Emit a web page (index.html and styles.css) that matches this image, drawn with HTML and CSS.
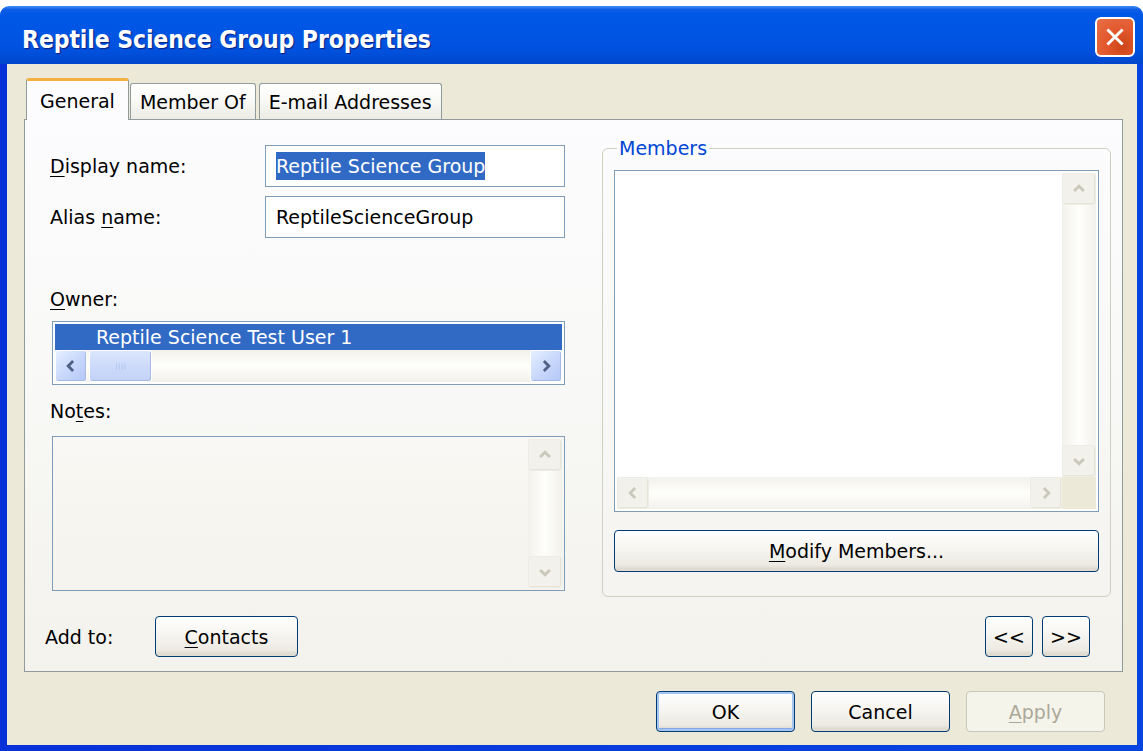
FILE: index.html
```html
<!DOCTYPE html>
<html lang="en">
<head>
<meta charset="utf-8">
<title>Reptile Science Group Properties</title>
<link rel="stylesheet" href="styles.css">
</head>
<body>
<div class="window">
  <div class="titlebar">
    <span class="title">Reptile Science Group Properties</span>
    <button class="close" aria-label="Close">
      <svg viewBox="0 0 20 20" width="22" height="22"><path d="M4 4 L16 16 M16 4 L4 16" stroke="#fff" stroke-width="2.6" stroke-linecap="square"/></svg>
    </button>
  </div>
  <div class="frame">
    <div class="client">
      <div class="tabs">
        <div class="tab active">General</div>
        <div class="tab">Member Of</div>
        <div class="tab">E-mail Addresses</div>
      </div>
      <div class="panel">
        <div class="col-left">
          <div class="field-row">
            <label class="lbl"><u>D</u>isplay name:</label>
            <div class="textbox"><span class="sel">Reptile Science Group</span></div>
          </div>
          <div class="field-row">
            <label class="lbl">Alias <u>n</u>ame:</label>
            <div class="textbox">ReptileScienceGroup</div>
          </div>
          <div class="lbl owner-lbl"><u>O</u>wner:</div>
          <div class="owner-box">
            <div class="owner-row">Reptile Science Test User 1</div>
            <div class="hscroll active-sb">
              <span class="sb-btn"><svg viewBox="0 0 10 10" width="14" height="14"><path d="M6.5 1.5 L3 5 L6.5 8.5" fill="none" stroke="#4d6185" stroke-width="2"/></svg></span>
              <span class="sb-thumb"><svg viewBox="0 0 12 8" width="14" height="9"><path d="M2 1v6M4.5 1v6M7 1v6M9.5 1v6" stroke="#b6c9ee" stroke-width="1"/></svg></span>
              <span class="sb-track"></span>
              <span class="sb-btn"><svg viewBox="0 0 10 10" width="14" height="14"><path d="M3.5 1.5 L7 5 L3.5 8.5" fill="none" stroke="#4d6185" stroke-width="2"/></svg></span>
            </div>
          </div>
          <div class="lbl notes-lbl">No<u>t</u>es:</div>
          <div class="notes-box">
            <div class="notes-text"></div>
            <div class="vscroll">
              <span class="sb-btn dis"><svg viewBox="0 0 10 10" width="14" height="14"><path d="M1.5 6.5 L5 3 L8.5 6.5" fill="none" stroke="#cac8bb" stroke-width="2"/></svg></span>
              <span class="sb-track"></span>
              <span class="sb-btn dis"><svg viewBox="0 0 10 10" width="14" height="14"><path d="M1.5 3.5 L5 7 L8.5 3.5" fill="none" stroke="#cac8bb" stroke-width="2"/></svg></span>
            </div>
          </div>
        </div>

        <fieldset class="group">
          <legend>Members</legend>
          <div class="members-box">
            <div class="members-view"></div>
            <div class="vscroll">
              <span class="sb-btn dis"><svg viewBox="0 0 10 10" width="14" height="14"><path d="M1.5 6.5 L5 3 L8.5 6.5" fill="none" stroke="#cac8bb" stroke-width="2"/></svg></span>
              <span class="sb-track"></span>
              <span class="sb-btn dis"><svg viewBox="0 0 10 10" width="14" height="14"><path d="M1.5 3.5 L5 7 L8.5 3.5" fill="none" stroke="#cac8bb" stroke-width="2"/></svg></span>
            </div>
            <div class="hscroll">
              <span class="sb-btn dis"><svg viewBox="0 0 10 10" width="14" height="14"><path d="M6.5 1.5 L3 5 L6.5 8.5" fill="none" stroke="#cac8bb" stroke-width="2"/></svg></span>
              <span class="sb-track"></span>
              <span class="sb-btn dis"><svg viewBox="0 0 10 10" width="14" height="14"><path d="M3.5 1.5 L7 5 L3.5 8.5" fill="none" stroke="#cac8bb" stroke-width="2"/></svg></span>
            </div>
            <div class="sb-corner"></div>
          </div>
          <button class="btn wide"><u>M</u>odify Members...</button>
        </fieldset>

        <div class="bottom-row">
          <span class="lbl add-lbl">Add to:</span>
          <button class="btn contacts"><u>C</u>ontacts</button>
          <span class="spacer"></span>
          <button class="btn nav">&lt;&lt;</button>
          <button class="btn nav">&gt;&gt;</button>
        </div>
      </div>
      <div class="dialog-buttons">
        <button class="btn dlg default">OK</button>
        <button class="btn dlg">Cancel</button>
        <button class="btn dlg disabled"><u>A</u>pply</button>
      </div>
    </div>
  </div>
</div>
</body>
</html>
```

FILE: styles.css
```css
* { box-sizing: border-box; }

html, body {
  margin: 0;
  padding: 0;
  background: #ffffff;
}

body {
  font-family: "DejaVu Sans", "Liberation Sans", sans-serif;
  font-size: 19px;
  color: #000;
  overflow: hidden;
}

u { text-decoration-thickness: 1px; text-underline-offset: 3px; }

/* ---------- window chrome ---------- */
.window {
  margin-top: 6px;
  width: 1143px;
  height: 745px;
  display: flex;
  flex-direction: column;
  border-radius: 9px 9px 0 0;
  overflow: hidden;
}

.titlebar {
  height: 58px;
  flex: none;
  display: flex;
  align-items: center;
  justify-content: space-between;
  padding: 8px 8px 0 22px;
  background: linear-gradient(180deg, #3f8cf3 0%, #0f5fe6 6%, #0057e6 14%, #0055e3 50%, #0050dc 80%, #0046cc 100%);
}

.title {
  color: #fff;
  font-family: "DejaVu Sans Condensed", "DejaVu Sans", sans-serif;
  font-stretch: condensed;
  font-weight: bold;
  font-size: 24.5px;
  letter-spacing: -0.1px;
  text-shadow: 1px 1px 1px #0a1e80;
}

.close {
  width: 40px;
  height: 40px;
  padding: 0;
  margin-top: -4px;
  border: 2px solid #fff;
  border-radius: 6px;
  background: radial-gradient(circle at 70% 75%, #cc4418 0%, #e2582c 45%, #e9704a 100%);
  display: flex;
  align-items: center;
  justify-content: center;
}

.frame {
  flex: 1;
  display: flex;
  padding: 0 6px 6px 7px;
  background: linear-gradient(90deg, #0831d9 0%, #0845e0 100%);
}

.client {
  flex: 1;
  background: #ece9d8;
  padding: 14px 14px 0 17px;
  display: flex;
  flex-direction: column;
}

/* ---------- tabs ---------- */
.tabs {
  height: 41px;
  display: flex;
  align-items: flex-end;
  padding-left: 2px;
  position: relative;
  z-index: 2;
}

.tab {
  height: 36px;
  padding: 0 9px;
  display: flex;
  align-items: center;
  border: 1px solid #919b9c;
  border-bottom: none;
  border-radius: 3px 3px 0 0;
  background: linear-gradient(180deg, #ffffff 0%, #fafaf8 40%, #ecebe5 100%);
  margin-left: 3px;
}

.tab.active + .tab { margin-left: 1px; }

.tab.active {
  height: 42px;
  margin-bottom: -1px;
  margin-left: 0;
  padding: 0 13px;
  border-top: 3px solid #f3b142;
  background: #fcfcfe;
}

/* ---------- property page ---------- */
.panel {
  height: 553px;
  flex: none;
  border: 1px solid #919b9c;
  background: linear-gradient(180deg, #fcfcfe 0%, #f8f8f6 50%, #f3f2ed 100%);
  padding: 25px 11px 0 25px;
  display: grid;
  grid-template-columns: 515px 509px;
  grid-template-rows: 452px 41px;
  column-gap: 37px;
  row-gap: 19px;
}

.col-left {
  display: flex;
  flex-direction: column;
}

.lbl { white-space: nowrap; }

.field-row {
  height: 42px;
  display: flex;
  align-items: center;
  margin-bottom: 9px;
}

.field-row .lbl { width: 215px; }

.textbox {
  width: 300px;
  height: 42px;
  border: 1px solid #7f9db9;
  background: #fff;
  display: flex;
  align-items: center;
  padding-left: 10px;
  white-space: nowrap;
  overflow: hidden;
}

.sel {
  background: #316ac5;
  color: #fff;
  padding: 2px 0;
  line-height: 24px;
}

.owner-lbl {
  margin-top: 40px;
  line-height: 24px;
}

.owner-box {
  margin: 10px 0 0 2px;
  width: 513px;
  height: 64px;
  border: 1px solid #7f9db9;
  background: #fff;
  padding: 2px;
  display: flex;
  flex-direction: column;
}

.owner-row {
  height: 26px;
  background: #316ac5;
  color: #fff;
  padding-left: 41px;
  line-height: 26px;
  white-space: nowrap;
}

.notes-lbl {
  margin-top: 14px;
  line-height: 24px;
}

.notes-box {
  margin: 13px 0 0 2px;
  width: 513px;
  height: 155px;
  border: 1px solid #7f9db9;
  background: linear-gradient(180deg, #f9f8f4, #f4f3ee);
  padding: 2px;
  display: flex;
}

.notes-text { flex: 1; }

/* ---------- scrollbars ---------- */
.hscroll {
  height: 32px;
  display: flex;
  background: linear-gradient(180deg, #f3f1ec 0%, #fefefb 50%, #f3f1ec 100%);
}

.vscroll {
  width: 34px;
  display: flex;
  flex-direction: column;
  background: linear-gradient(90deg, #f3f1ec 0%, #fefefb 50%, #f3f1ec 100%);
}

.sb-btn {
  width: 32px;
  height: 32px;
  flex: none;
  display: flex;
  align-items: center;
  justify-content: center;
  border: 1px solid #fff;
  border-radius: 3px;
}

.vscroll .sb-btn { width: 34px; }

.sb-btn.dis {
  background: #f2f1eb;
  border-color: #eeede5;
  box-shadow: inset -1px -1px 0 #e6e4d8;
}

.sb-track { flex: 1; }

.active-sb .sb-btn {
  background: linear-gradient(135deg, #e6efff 0%, #c9d8fc 50%, #b4c8f6 100%);
  border-color: #fff;
  box-shadow: inset -1px -1px 0 #a5b9e4;
}

.sb-thumb {
  width: 63px;
  margin-left: 2px;
  display: flex;
  align-items: center;
  justify-content: center;
  border: 1px solid #fff;
  border-radius: 3px;
  background: linear-gradient(180deg, #dbe6fd 0%, #cddafa 50%, #c2d3f8 100%);
  box-shadow: inset -1px -1px 0 #a5b9e4;
}

/* ---------- members group ---------- */
.group {
  margin: -8px 0 0 0;
  padding: 0 11px 24px 11px;
  border: 1px solid #d0d0bf;
  border-radius: 6px;
  min-width: 0;
  display: flex;
  flex-direction: column;
}

.group legend {
  color: #0046d5;
  padding: 0 2px;
  margin-left: 3px;
  line-height: 22px;
}

.members-box {
  margin-top: 11px;
  height: 342px;
  border: 1px solid #7f9db9;
  background: #fff;
  padding: 2px;
  display: grid;
  grid-template-columns: 1fr 34px;
  grid-template-rows: 1fr 32px;
}

.members-view { background: #fff; }
.members-box .vscroll { grid-column: 2; grid-row: 1; }
.members-box .hscroll { grid-column: 1; grid-row: 2; }
.sb-corner { background: #ece9d8; }

/* ---------- buttons ---------- */
.btn {
  font: inherit;
  color: #000;
  height: 42px;
  border: 1px solid #003c74;
  border-radius: 4px;
  background: linear-gradient(180deg, #ffffff 0%, #f7f6f2 40%, #eceae2 85%, #d6d0c5 100%);
  box-shadow: inset 0 -2px 0 #e0dccf, inset 0 2px 0 #fff;
  padding: 0;
  display: flex;
  align-items: center;
  justify-content: center;
}

.btn.wide {
  margin-top: 18px;
  width: 100%;
}

.bottom-row {
  grid-column: 1 / span 2;
  display: flex;
  align-items: center;
  margin-right: 21px;
}

.add-lbl {
  margin-left: -5px;
  width: 110px;
}

.btn.contacts { width: 143px; height: 41px; }
.spacer { flex: 1; }
.btn.nav { width: 48px; height: 41px; margin-left: 9px; }

.dialog-buttons {
  margin-top: 19px;
  display: flex;
  justify-content: flex-end;
  gap: 16px;
  padding-right: 18px;
}

.btn.dlg { width: 139px; height: 41px; }

.btn.default {
  box-shadow: inset 0 0 0 2px #a6c4f2, inset 0 -3px 0 #86a8e6;
}

.btn.disabled {
  color: #aca899;
  border-color: #c9c7ba;
  background: #f5f4ea;
  box-shadow: none;
}
```
